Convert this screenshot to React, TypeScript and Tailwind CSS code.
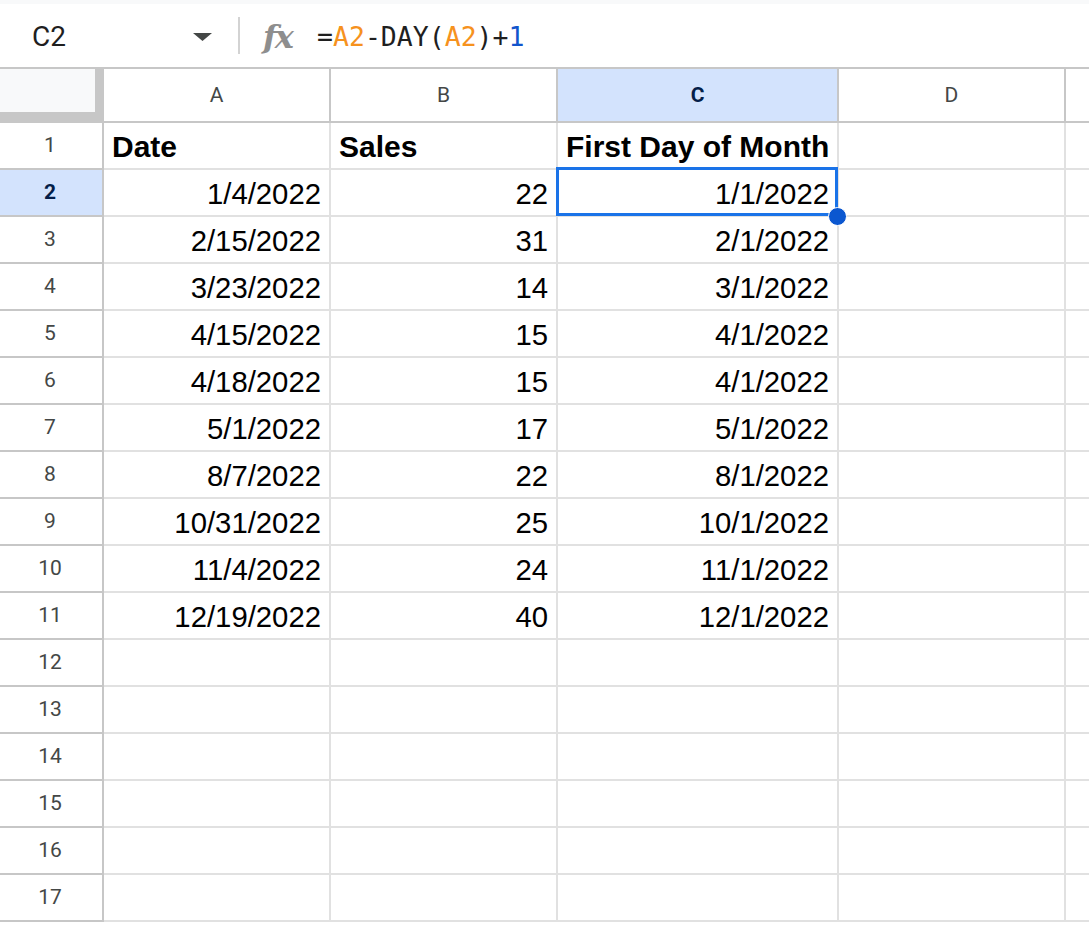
import React from "react";

const rows: [string, string, string][] = [
  ["Date", "Sales", "First Day of Month"],
  ["1/4/2022", "22", "1/1/2022"],
  ["2/15/2022", "31", "2/1/2022"],
  ["3/23/2022", "14", "3/1/2022"],
  ["4/15/2022", "15", "4/1/2022"],
  ["4/18/2022", "15", "4/1/2022"],
  ["5/1/2022", "17", "5/1/2022"],
  ["8/7/2022", "22", "8/1/2022"],
  ["10/31/2022", "25", "10/1/2022"],
  ["11/4/2022", "24", "11/1/2022"],
  ["12/19/2022", "40", "12/1/2022"],
];

const TOTAL_ROWS = 17;

const cols = [
  { key: "A", w: "w-[227px]" },
  { key: "B", w: "w-[227px]" },
  { key: "C", w: "w-[281px]" },
  { key: "D", w: "w-[227px]" },
];

function FormulaBar() {
  return (
    <div className="h-[63px] flex items-center bg-white">
      <div className="w-[228px] flex items-center justify-between pl-[32px] pr-[16px] pt-[2px]">
        <span className="font-['Roboto'] text-[28px] text-[#1f1f1f] leading-none">C2</span>
        <svg width="19" height="8" viewBox="0 0 19 8">
          <polygon points="0,0 19,0 9.5,8" fill="#444746" />
        </svg>
      </div>
      <div className="ml-[10px] w-[2px] h-[37px] bg-[#d3d3d3]" />
      <span className="ml-[23px] w-[38px] pt-[2px] font-['DejaVu_Serif'] italic font-bold text-[32px] leading-none text-[#8e8e8e] tracking-[-2px]">
        fx
      </span>
      <div className="ml-[16px] pt-[3px] font-['DejaVu_Sans_Mono'] text-[26.5px] leading-none text-[#1f1f1f] whitespace-pre">
        =<span className="text-[#f6921e]">A2</span>-DAY(<span className="text-[#f6921e]">A2</span>)+<span className="text-[#1155cc]">1</span>
      </div>
    </div>
  );
}

function HeaderRow() {
  return (
    <div className="flex h-[56px]">
      {/* corner with freeze bars */}
      <div className="w-[104px] h-[56px] bg-[#c7c7c7] pt-[2px]">
        <div className="w-[95px] h-[43px] bg-[#f8f9fa]" />
      </div>
      {cols.map((c) => {
        const sel = c.key === "C";
        return (
          <div
            key={c.key}
            className={`${c.w} shrink-0 border-t-2 border-b-2 border-r-2 border-[#c7c7c7] flex items-center justify-center font-['Roboto'] text-[21px] leading-none ${
              sel ? "bg-[#d3e3fd] text-[#041e49] font-bold" : "bg-white text-[#444746]"
            }`}
          >
            {c.key}
          </div>
        );
      })}
      <div className="flex-1 border-t-2 border-b-2 border-[#c7c7c7] bg-white" />
    </div>
  );
}

function Row({ n }: { n: number }) {
  const data = rows[n - 1];
  const isHead = n === 1;
  const rowSel = n === 2;
  return (
    <div className="flex h-[47px]">
      <div
        className={`w-[104px] shrink-0 border-r-2 border-b-2 border-[#c7c7c7] flex items-center justify-center pr-[2px] font-['Roboto'] text-[21px] leading-none ${
          rowSel ? "bg-[#d3e3fd] text-[#041e49] font-bold" : "bg-white text-[#444746]"
        }`}
      >
        {n}
      </div>
      {cols.map((c, i) => {
        const val = data ? data[i] : undefined;
        const selected = rowSel && c.key === "C";
        return (
          <div
            key={c.key}
            className={`${c.w} shrink-0 border-r-2 border-b-2 border-[#e1e1e1] flex items-center pt-[2px] leading-none text-black ${
              isHead ? "justify-start pl-[8px] font-bold text-[30px]" : "justify-end pr-[8px] text-[29.3px]"
            } ${selected ? "relative" : ""}`}
          >
            {val}
            {selected && (
              <>
                <div className="absolute z-10 left-[-2px] top-[-3px] w-[282px] h-[49px] border-[3px] border-[#1a73e8]" />
                <div className="absolute z-20 left-[270px] top-[37px] w-[19px] h-[19px] rounded-full bg-[#0b57d0] border border-white" />
              </>
            )}
          </div>
        );
      })}
      <div className="flex-1 border-b-2 border-[#e1e1e1]" />
    </div>
  );
}

export default function App() {
  return (
    <div className="w-[1089px] h-[927px] overflow-hidden bg-white font-['Liberation_Sans',sans-serif]">
      <div className="h-[4px] bg-[#f8f9fa]" />
      <FormulaBar />
      <HeaderRow />
      {Array.from({ length: TOTAL_ROWS }, (_, i) => (
        <Row key={i} n={i + 1} />
      ))}
    </div>
  );
}
